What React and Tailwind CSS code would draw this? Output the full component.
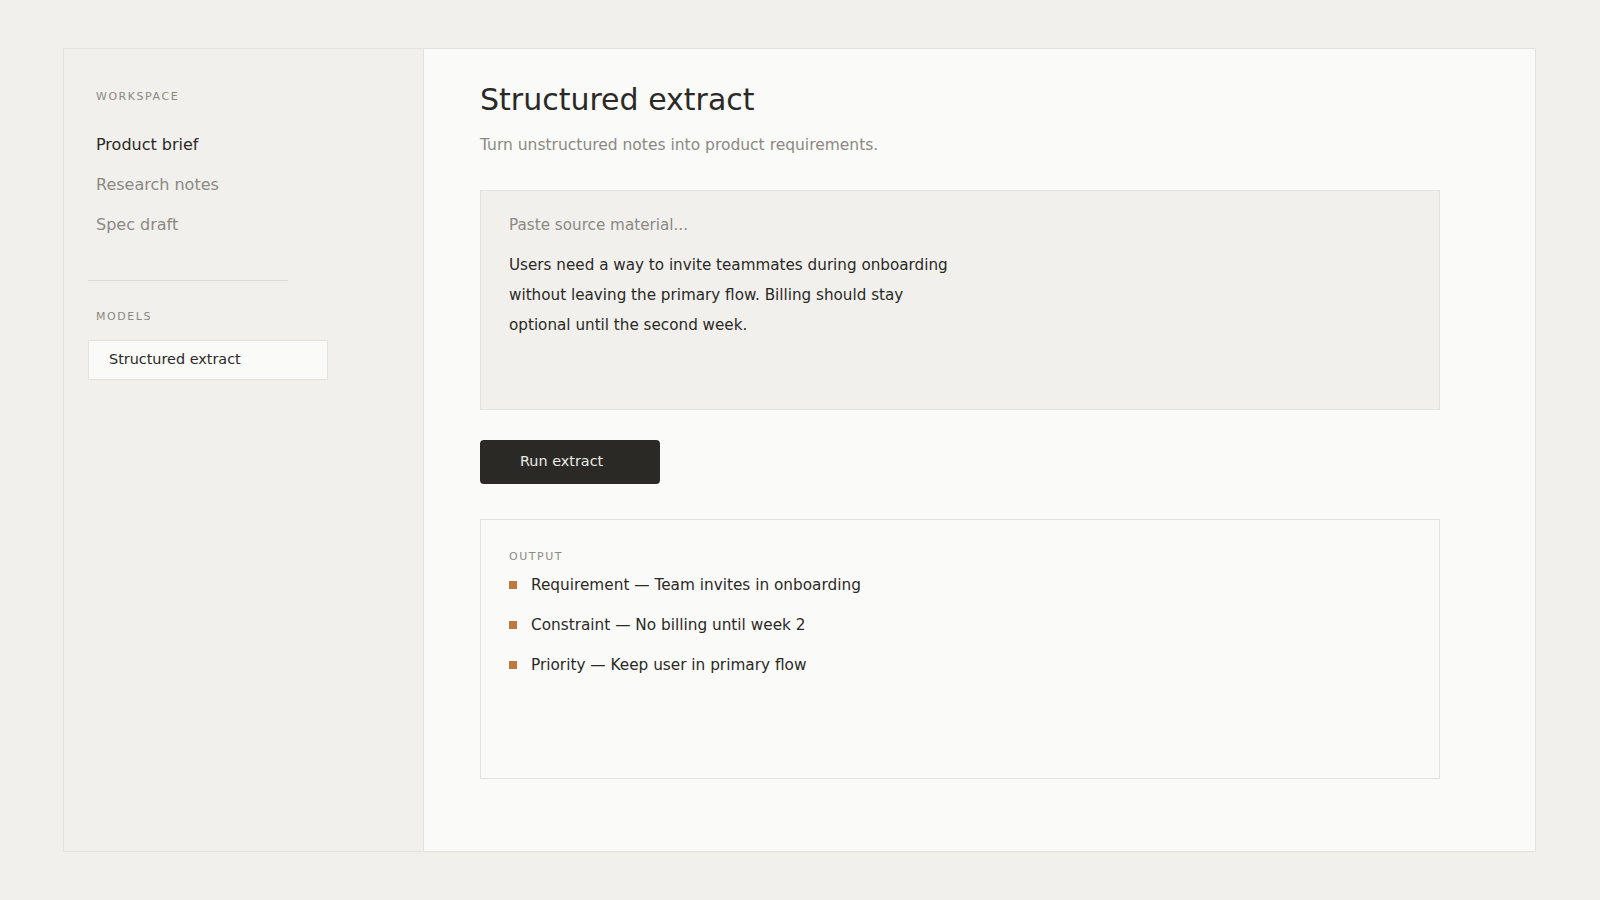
import React from "react";

const workspace = ["Product brief", "Research notes", "Spec draft"];

const output = [
  "Requirement — Team invites in onboarding",
  "Constraint — No billing until week 2",
  "Priority — Keep user in primary flow",
];

export default function App() {
  return (
    <div className="min-h-screen bg-[#f1f0ec] pl-[63px] pr-16 py-12 font-['DejaVu_Sans',sans-serif] text-[#2a2926]">
      <div className="flex h-[804px] border border-[#e3e2dd]">
        {/* Sidebar */}
        <aside className="w-[360px] shrink-0 border-r border-[#e3e2dd] bg-[#f1f0ec] px-6 pt-10">
          <div className="mb-5 px-2 text-[11px] leading-4 tracking-[0.14em] text-[#8b8983]">
            WORKSPACE
          </div>
          <nav className="flex flex-col">
            {workspace.map((item, i) => (
              <div
                key={item}
                className={
                  "px-2 py-2 text-base leading-6 " +
                  (i === 0 ? "text-[#2a2926]" : "text-[#8b8983]")
                }
              >
                {item}
              </div>
            ))}
          </nav>
          <div className="mt-[35px] h-px w-[200px] bg-[#dcdad5]" />
          <div className="mt-[28px] px-2 text-[11px] leading-4 tracking-[0.14em] text-[#8b8983]">
            MODELS
          </div>
          <div className="mt-[15px] flex h-10 w-[240px] items-center border border-[#e3e2dd] bg-[#fafaf8] pl-5 text-[14.4px] text-[#2a2926]">
            Structured extract
          </div>
        </aside>

        {/* Main */}
        <main className="flex-1 bg-[#fafaf8] pl-14 pt-[33px]">
          <div className="max-w-[960px]">
            <h1 className="text-[30px] leading-9 font-normal text-[#2a2926]">
              Structured extract
            </h1>
            <p className="mt-4 text-[15.5px] leading-[22px] text-[#8b8983]">
              Turn unstructured notes into product requirements.
            </p>

            <div className="mt-[34px] h-[220px] border border-[#e3e2dd] bg-[#f1f0ec] px-7 pt-[23px]">
              <div className="text-[15.2px] leading-[22px] text-[#8b8983]">
                Paste source material...
              </div>
              <p className="mt-[14px] max-w-[452px] text-[15.2px] leading-[30px] text-[#2a2926]">
                Users need a way to invite teammates during onboarding without
                leaving the primary flow. Billing should stay optional until the
                second week.
              </p>
            </div>

            <button className="mt-[30px] flex h-11 w-[180px] items-center rounded bg-[#2a2926] pl-10 text-[14.4px] text-[#ecebe6]">
              Run extract
            </button>

            <div className="mt-[35px] h-[260px] border border-[#e3e2dd] bg-[#fafaf8] px-7 pt-[29px]">
              <div className="text-[11px] leading-4 tracking-[0.14em] text-[#8b8983]">
                OUTPUT
              </div>
              <ul>
                {output.map((line) => (
                  <li key={line} className="flex items-center gap-[14px] py-2 text-[15.3px] leading-6 text-[#2a2926]">
                    <span className="h-2 w-2 shrink-0 bg-[#c07a3e]" />
                    {line}
                  </li>
                ))}
              </ul>
            </div>
          </div>
        </main>
      </div>
    </div>
  );
}
